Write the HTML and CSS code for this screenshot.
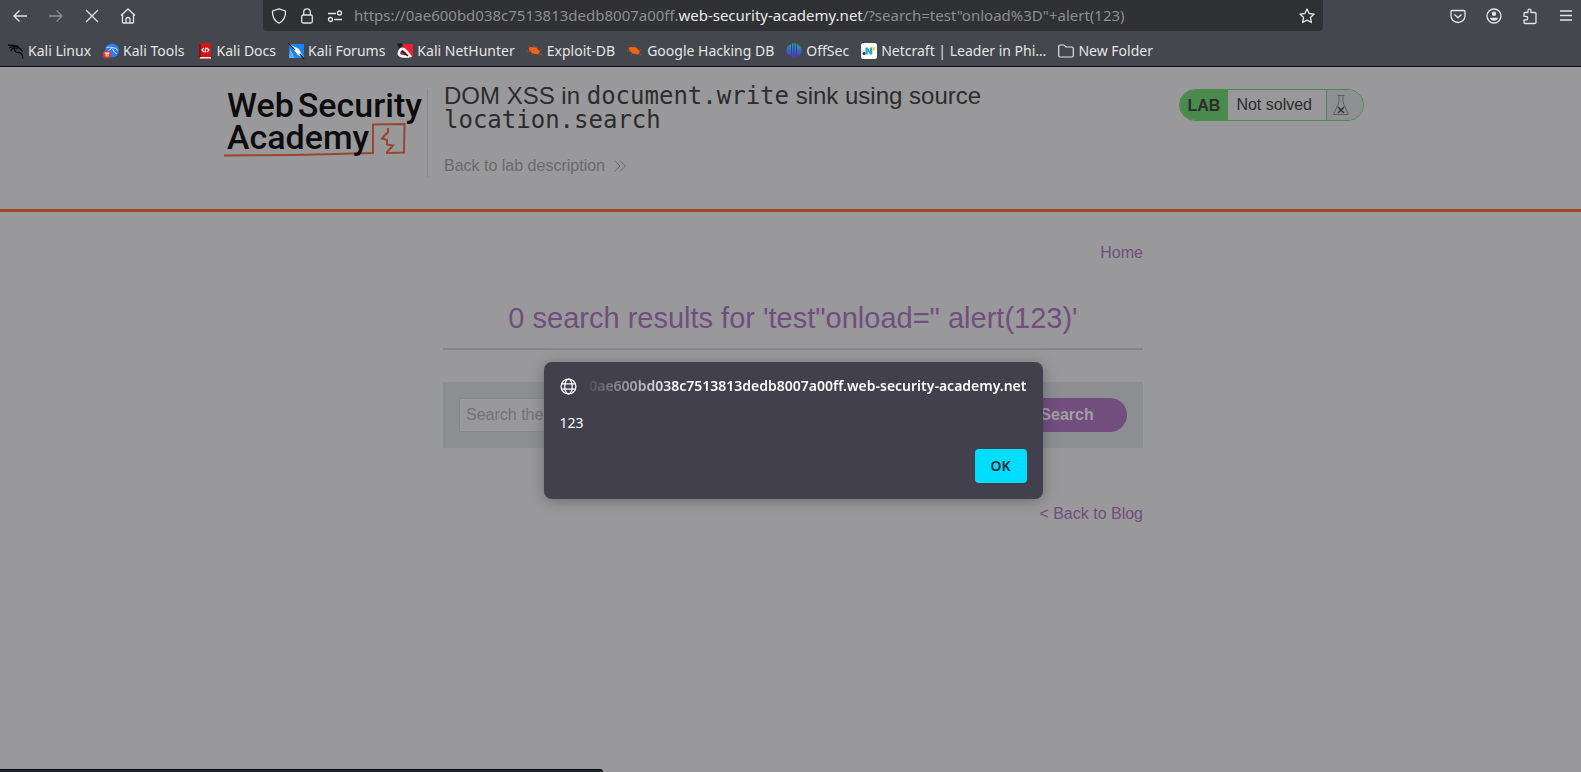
FILE: index.html
```html
<!DOCTYPE html>
<html lang="en">
<head>
<meta charset="utf-8">
<title>DOM XSS in document.write sink using source location.search</title>
<link rel="stylesheet" href="styles.css">
</head>
<body>
<header class="browser">
  <div class="toolbar">
    <nav class="nav-buttons">
      <button class="tool" aria-label="Back"><svg viewBox="0 0 16 16"><path d="M15 8H2M7.500 2.500 2 8l5.500 5.500"/></svg></button>
      <button class="tool dim" aria-label="Forward"><svg viewBox="0 0 16 16"><path d="M1 8h13M8.500 2.500 14 8l-5.500 5.500"/></svg></button>
      <button class="tool" aria-label="Stop"><svg viewBox="0 0 16 16"><path d="m2 2 12 12M14 2 2 14"/></svg></button>
      <button class="tool" aria-label="Home"><svg viewBox="0 0 16 16"><path d="M1 7.500 8 1l7 6.500M2.500 6.500V14q0 1 1 1h9q1 0 1-1V6.500M6 15v-4q0-1.500 2-1.500t2 1.500v4"/></svg></button>
    </nav>
    <div class="urlbar">
      <svg class="icon" viewBox="0 0 16 16"><path d="M8 .8 14.500 3c.3 5-1.500 9.500-6.500 12.200C3 12.500 1.200 8 1.500 3z"/></svg>
      <svg class="icon" viewBox="0 0 16 16"><rect x="2.700" y="7" width="10.600" height="8" rx="1.500"/><path d="M4.700 7V4.200a3.300 3.300 0 0 1 6.600 0V7"/></svg>
      <svg class="icon" viewBox="0 0 16 16"><path d="M1 5.500h8M7 11.500h8"/><circle cx="12.500" cy="5" r="2"/><circle cx="3.500" cy="11.500" r="2"/></svg>
      <p class="url">https://0ae600bd038c7513813dedb8007a00ff.<b>web-security-academy.net</b>/?search=test"onload%3D"+alert(123)</p>
      <button class="tool star" aria-label="Bookmark this page"><svg viewBox="0 0 16 16"><path d="m8 1 2.100 4.500 5 .6-3.700 3.400 1 5L8 12.200l-4.400 2.300 1-5L.9 6.100l5-.6z"/></svg></button>
    </div>
    <div class="actions">
      <button class="tool" aria-label="Pocket"><svg viewBox="0 0 16 16"><path d="M2 2.500h12q1 0 1 1V8a7 6.500 0 0 1-14 0V3.500q0-1 1-1zM4.500 6.500 8 9.800l3.500-3.300"/></svg></button>
      <button class="tool" aria-label="Account"><svg viewBox="0 0 16 16"><circle cx="8" cy="8" r="7"/><circle class="solid" cx="8" cy="5.800" r="2.200"/><path class="solid" d="M4 9.800h8q-.6 2.900-4 2.900t-4-2.900z"/></svg></button>
      <button class="tool" aria-label="Extensions"><svg viewBox="0 0 16 16"><path d="M2 5.500q0-1 1-1h3V2.600a1.500 1.500 0 0 1 3 0v1.900h4q1 0 1 1v9q0 1-1 1H3q-1 0-1-1V12h2a1.800 1.800 0 0 0 0-3.600H2z"/></svg></button>
      <button class="tool" aria-label="Menu"><svg viewBox="0 0 16 16"><path d="M2 3h12M2 7.500h12M2 12h12"/></svg></button>
    </div>
  </div>
  <nav class="bookmarks">
    <a href="#"><svg viewBox="0 0 16 16"><path d="M0 2 6 2.500l4.500 1M1 5l5-1.500 4 .5M2.500 8q2-3 4-3-.5 4.500 4 4.500 4 0 4.500 6M7.500 6q4-2.500 5.500 1l2 1.500" fill="none" stroke="#0b0c0e" stroke-width="1.300"/></svg>Kali Linux</a>
    <a href="#"><svg viewBox="0 0 16 16"><circle cx="9" cy="7.500" r="7" fill="#2d7ff0"/><path d="M3.500 4.500q4-1 8 .5M5 8q4-4 5-1 .5 2 4 4M11 5q3 0 3.500 2.500" fill="none" stroke="#c3dbff"/><circle cx="4" cy="11.500" r="4" fill="#e2362f"/><path d="M1.500 10h5M3.200 10v3.500M5 10v3.500" stroke="#fff"/></svg>Kali Tools</a>
    <a href="#"><svg viewBox="0 0 16 16"><path d="M2 1q0-1 1-1h11v14H3v1h11v1H3q-1 0-1-1z" fill="#d41217"/><path d="M2 1h2v13H2z" fill="#8c1013"/><path d="M3 14h11v1.500H3z" fill="#eee"/><path d="M7 5 5 7l2 2M10 5l2 2-2 2M9 4.500 8 9.500" fill="none" stroke="#fff" stroke-width="1.200"/></svg>Kali Docs</a>
    <a href="#"><svg viewBox="0 0 16 16"><path d="M1 1h15v14H1z" fill="#1684f8"/><path d="m2 6 5 9H1z" fill="#63adf8"/><path d="M1 1 7 4l4 2 2 4 3 5-6-3-4-5z" fill="#fff"/><path d="M0 0 7 7M12 11l4 5" fill="none" stroke="#16191d" stroke-width="1.300"/></svg>Kali Forums</a>
    <a href="#"><svg viewBox="0 0 16 16"><path d="M6 1h10v13H5z" fill="#ed1c2e"/><path d="M0 1 4 0l2 2-4 3z" fill="#16191d"/><path d="M14 14 10 9Q5 3 2.500 8T7 13.500h5" fill="none" stroke="#fff" stroke-width="2.600"/><path d="m5 8 6 5" stroke="#16191d" stroke-width="1.300"/></svg>Kali NetHunter</a>
    <a href="#"><svg viewBox="0 0 16 16"><path d="m1.500 4.500 3-.5 5 .5L13 9l-2 2.500-5.500-1-3-3z" fill="#ee6411"/><path d="M0 8h4M6 2l2 2.500M12 7.500l3-1M11 10.500l4 1.500M6 10l-2 2" stroke="#a95529" stroke-width=".8"/></svg>Exploit-DB</a>
    <a href="#"><svg viewBox="0 0 16 16"><path d="m1.500 4.500 3-.5 5 .5L13 9l-2 2.500-5.500-1-3-3z" fill="#ee6411"/><path d="M0 8h4M6 2l2 2.500M12 7.500l3-1M11 10.500l4 1.500M6 10l-2 2" stroke="#a95529" stroke-width=".8"/></svg>Google Hacking DB</a>
    <a href="#"><svg viewBox="0 0 16 16"><defs><linearGradient id="offsec" x2="0" y2="1"><stop stop-color="#16a5b8"/><stop offset="1" stop-color="#5a22e0"/></linearGradient></defs><path d="M5 1v12.500Q.5 12 .5 7.500T5 1zM6 .6l1.500-.4V15.800L6 14zM8.500.2l1.500.4V14l-1.500 1.500zM11 1q4.500 2 4.500 6.500t-4.500 6z" fill="url(#offsec)"/></svg>OffSec</a>
    <a href="#"><svg viewBox="0 0 16 16"><rect width="16" height="16" rx="2.500" fill="#fff"/><path d="M4.500 4.500h2.300L9 8.200V4.500h2.200v7H9L6.800 8v3.500H4.500z" fill="#26a7cc"/><circle cx="3" cy="10.500" r="1.500" fill="#153d50"/><path d="M11.500 4H14v2q0 2-2.500 2z" fill="#f2db18"/></svg>Netcraft | Leader in Phi…</a>
    <a href="#"><svg viewBox="0 0 16 16"><path d="M.7 3.500q0-1.500 1.500-1.500H6l2 2h5.800q1.500 0 1.500 1.500v7q0 1.500-1.500 1.500H2.200Q.7 14 .7 12.500z" fill="none" stroke="#e4e4e2" stroke-width="1.200"/></svg>New Folder</a>
  </nav>
</header>

<div class="page">
  <section class="lab-header">
    <div class="lab-inner">
      <a class="logo" href="#" aria-label="Web Security Academy">
        <svg class="logo-mark" viewBox="0 0 184 36"><path d="M0 32.500 70 32l80-2" fill="none" stroke="#9b452c" stroke-width="2"/><path d="M149 31V1.500L180.500 1 180 29.500l-17 .5v-1l6-6.500-6-1V17l-5-1.500L164 9V5" fill="none" stroke="#9b452c" stroke-width="2"/></svg>
        <span class="logo-line"><span>Web</span><span>Security</span></span>
        <span class="logo-line">Academy</span>
      </a>
      <div class="title">
        <h2>DOM XSS in <code>document.write</code> sink using source <code>location.search</code></h2>
        <a class="back" href="#">Back to lab description <svg viewBox="0 0 12 12"><path d="M.5.500 6 6 .5 11.500M6 .5 11.500 6 6 11.500"/></svg></a>
      </div>
      <div class="lab-status">
        <strong>LAB</strong>
        <span class="state">Not solved</span>
        <span class="flask"><svg viewBox="0 0 16 20"><path d="M4.500.500h7M6 .5v7L.5 19.500h15L10 7.500v-7" fill="none" stroke="#5c5e62"/><path d="m5 12 6 6M11 12l-6 6" stroke="#333" stroke-width="1.500"/></svg></span>
      </div>
    </div>
  </section>
  <main class="content">
    <nav class="top-link"><a href="#">Home</a></nav>
    <h1>0 search results for 'test"onload=" alert(123)'</h1>
    <hr>
    <form class="search">
      <input type="text" placeholder="Search the blog..." aria-label="Search the blog">
      <button type="button">Search</button>
    </form>
    <a class="blog-link" href="#">&lt; Back to Blog</a>
  </main>
  <div class="overlay">
    <div class="dialog" role="alertdialog" aria-labelledby="origin">
      <div class="dialog-head">
        <svg viewBox="0 0 16 16"><circle cx="8" cy="8" r="7"/><ellipse cx="8" cy="8" rx="3.500" ry="7"/><path d="M1.500 5.500h13M1.500 10.500h13"/></svg>
        <p class="origin" id="origin"><span>0ae600bd038c7513813dedb8007a00ff.web-security-academy.net</span></p>
      </div>
      <p class="message">123</p>
      <button class="ok">OK</button>
    </div>
  </div>
</div>
<div class="status-bar"></div>
</body>
</html>
```
FILE: styles.css
```css
* { box-sizing: border-box; }
body {
  margin: 0;
  height: 100vh;
  display: flex;
  flex-direction: column;
  overflow: hidden;
  background: #99999b;
  font: 16px/20px "Liberation Sans", Arial, sans-serif;
}
h1, h2, p { margin: 0; font-weight: normal; }
a { color: inherit; text-decoration: none; }
button { border: 0; padding: 0; font: inherit; color: inherit; background: none; }
svg { display: block; overflow: visible; }

/* Browser chrome */
.browser {
  flex: none;
  background: #44474e;
  border-bottom: 1px solid #0d0e11;
  color: #e4e4e2;
  font: 14px/20px "Noto Sans", sans-serif;
}
.toolbar { display: flex; height: 31px; }
.nav-buttons { display: flex; align-items: center; gap: 20px; padding-left: 12px; width: 263px; }
.tool svg, .icon { width: 16px; height: 16px; fill: none; stroke: #e4e4e2; stroke-width: 1.3; stroke-linejoin: round; }
.tool .solid { fill: #e4e4e2; stroke: none; }
.dim { opacity: .45; }
.urlbar {
  flex: 1;
  display: flex;
  align-items: center;
  gap: 10px;
  padding: 0 8px 0 7px;
  background: #303135;
  border-radius: 0 0 4px 4px;
}
.urlbar .icon { flex: none; width: 18px; padding: 0 1px; }
.url { flex: 1; padding-bottom: 2px; font-size: 15px; color: #8d8e90; white-space: nowrap; }
.url b { color: #e9e9e7; font-weight: normal; }
.actions { display: flex; align-items: center; gap: 20px; padding: 0 7px 0 127px; }
.bookmarks { display: flex; gap: 12px; height: 35px; padding: 4px 8px 0; align-items: center; white-space: nowrap; }
.bookmarks a { display: flex; align-items: center; gap: 4px; }
.bookmarks svg { width: 16px; height: 16px; }

/* Lab page */
.page { flex: 1; position: relative; padding-left: 5px; }
.lab-header { margin-left: -5px; padding: 22px 0 32px 7px; border-bottom: 3px solid #9b452c; }
.lab-inner { display: flex; align-items: flex-start; max-width: 1140px; margin: 0 auto; color: #2c2c2d; }
.logo {
  position: relative;
  width: 204px;
  height: 88px;
  padding-left: 3px;
  border-right: 1px solid #88888a;
  font: 500 34px/32px Roboto, sans-serif;
  color: #0c0c0d;
}
.logo-line { position: relative; display: flex; gap: 4px; }
.logo-mark { position: absolute; left: 0; top: 34px; width: 184px; height: 36px; }
.title { flex: 1; padding-left: 16px; }
.title h2 { max-width: 580px; font-size: 24px; line-height: 24px; padding-bottom: 24px; margin-top: -5px; }
.title code { font: 24px/24px "DejaVu Sans Mono", monospace; }
.back { display: flex; align-items: center; gap: 9px; color: #69696a; line-height: 20px; }
.back svg { width: 12px; height: 12px; fill: none; stroke: #69696a; }
.lab-status { display: flex; height: 32px; border: 1px solid #4b8a4d; border-radius: 16px; overflow: hidden; line-height: 30px; }
.lab-status strong { padding: 1px 8px 0; background: #4b8a4d; }
.state { padding: 0 14px 0 8px; }
.flask { display: flex; align-items: center; padding: 0 13px 0 6px; width: 37px; border-left: 1px solid #4b8a4d; background: #8e9094; }
.flask svg { width: 16px; height: 20px; }

.content { max-width: 700px; margin: 0 auto; padding-top: 31px; color: #714e7e; display: flex; flex-direction: column; }
.top-link { text-align: right; }
h1 { text-align: center; font-size: 29px; line-height: 36px; padding: 37px 0 12px; }
hr { width: 100%; height: 2px; margin: 0 0 32px; border: 0; background: #878788; }
.search { display: flex; padding: 16px; background: #8c8e92; }
.search input {
  flex: 1;
  min-width: 0;
  height: 34px;
  padding: 0 6px;
  border: 1px solid #858688;
  background: #99999b;
  font: inherit;
}
.search input::placeholder { color: #727273; opacity: 1; }
.search button { width: 120px; border-radius: 0 17px 17px 0; background: #714e7e; color: #a2a0a4; font-weight: bold; }
.blog-link { align-self: flex-end; margin-top: 56px; }

/* Alert */
.overlay { position: absolute; inset: 0; padding: 295px 0 0 5px; }
.dialog {
  width: 499px;
  margin: 0 auto;
  padding: 14px 16px 16px;
  border-radius: 8px;
  background: #42404d;
  box-shadow: 0 2px 14px rgba(30, 30, 40, .35);
  color: #fbfbfe;
  font: 14px/20px "Noto Sans", sans-serif;
  display: flex;
  flex-direction: column;
}
.dialog-head { display: flex; align-items: center; gap: 4px; }
.dialog-head svg { flex: none; width: 17px; height: 17px; fill: none; stroke: #fbfbfe; stroke-width: 1.2; }
.origin {
  flex: 1;
  min-width: 0;
  display: flex;
  justify-content: flex-end;
  overflow: hidden;
  font-weight: 600;
  white-space: nowrap;
  -webkit-mask-image: linear-gradient(to right, transparent, #000 96px);
  mask-image: linear-gradient(to right, transparent, #000 96px);
}
.message { padding: 17px 0 16px; }
.ok { align-self: flex-end; width: 52px; height: 34px; border-radius: 4px; background: #00ddff; color: #2b2a33; font-weight: 600; }

.status-bar { position: fixed; left: 0; bottom: 0; width: 603px; height: 3px; background: #20242b; border-top: 1px solid #0d0e11; border-radius: 0 3px 0 0; }
```
